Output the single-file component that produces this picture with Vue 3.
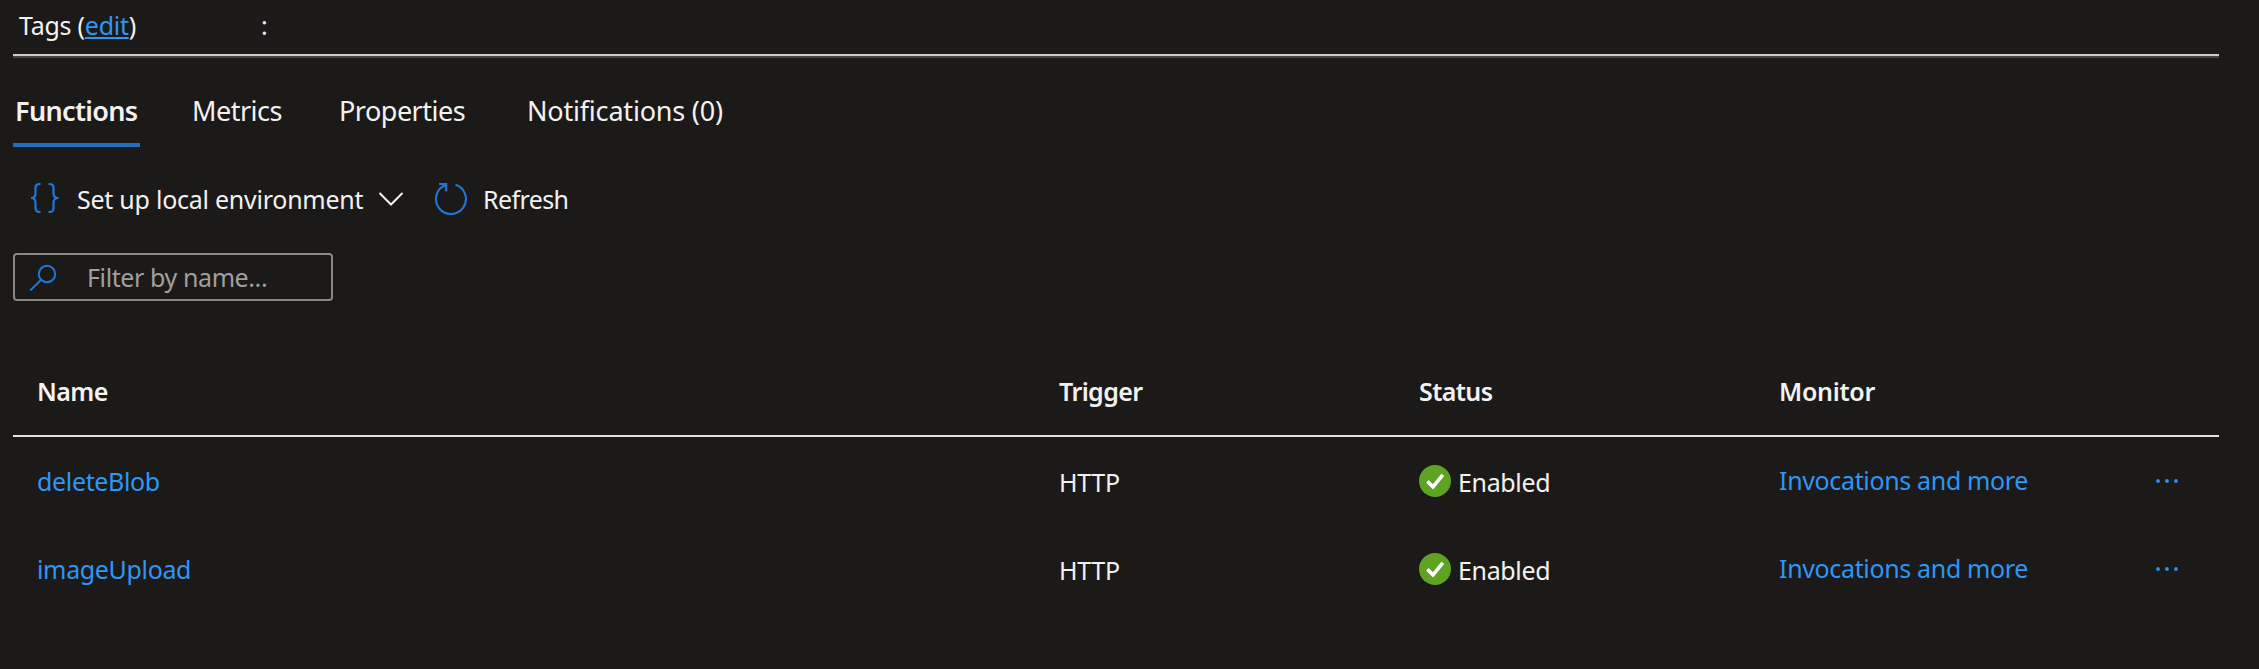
<script setup>
const tabs = [
  { label: 'Functions', key: 'functions' },
  { label: 'Metrics', key: 'metrics' },
  { label: 'Properties', key: 'properties' },
  { label: 'Notifications (0)', key: 'notifications' }
]
const rows = [
  { name: 'deleteBlob', key: 'delete' },
  { name: 'imageUpload', key: 'upload' }
]
</script>

<template>
  <main class="page">
    <section class="tags">
      <span class="tags-label">Tags (<a class="edit">edit</a>)</span>
      <span>:</span>
    </section>

    <nav class="tabs">
      <a v-for="(tab, i) in tabs" :key="tab.key" class="tab" :class="[tab.key, { active: i === 0 }]">{{ tab.label }}</a>
    </nav>

    <div class="toolbar">
      <svg class="braces" width="30" height="32" viewBox="0 0 30 32" fill="none" stroke="#1f78d8" stroke-width="2.2">
        <path d="M10.500 2H9.500Q5.500 2 5.500 6V11.500Q5.500 16 1 16Q5.500 16 5.500 20.500V26Q5.500 30 9.500 30H10.500" />
        <path d="M18.500 2H19.500Q23.500 2 23.500 6V11.500Q23.500 16 28.500 16Q23.500 16 23.500 20.500V26Q23.500 30 19.500 30H18.500" />
      </svg>
      <span class="setup">Set up local environment</span>
      <svg class="chevron" width="26" height="16" viewBox="0 0 26 16" fill="none" stroke="#f3f2f1" stroke-width="2">
        <path d="M1.500 2L13 13.500L24.500 2" />
      </svg>
      <svg class="reload" width="34" height="34" viewBox="0 0 34 34" fill="none" stroke="#1f78d8" stroke-width="2.100">
        <path d="M21.500 2.800A15 15 0 1 1 11.800 3" />
        <path d="M5 2H12.200V9.500" />
      </svg>
      <span class="refresh">Refresh</span>
    </div>

    <div class="filter">
      <svg width="28" height="28" viewBox="0 0 28 28" fill="none" stroke="#1f78d8" stroke-width="2">
        <circle cx="18" cy="10" r="8.200" />
        <path d="M12.200 15.800L1.200 26.500" />
      </svg>
      <span>Filter by name...</span>
    </div>

    <section class="table">
      <div class="row head">
        <span class="h-name">Name</span>
        <span class="h-trigger">Trigger</span>
        <span class="h-status">Status</span>
        <span class="h-monitor">Monitor</span>
      </div>
      <div v-for="row in rows" :key="row.key" class="row body">
        <a class="link" :class="row.key">{{ row.name }}</a>
        <span class="http">HTTP</span>
        <span class="status">
          <svg width="32" height="32" viewBox="0 0 32 32">
            <circle cx="16" cy="16" r="16" fill="#5fa324" />
            <path d="M8.300 16.400L14 21.800L23.800 9.800" fill="none" stroke="#fff" stroke-width="3.600" />
          </svg>
          <span class="enabled">Enabled</span>
        </span>
        <a class="link monitor">Invocations and more</a>
        <svg class="dots" width="24" height="6" viewBox="0 0 24 6" fill="#2f8ff0">
          <circle cx="3" cy="3" r="1.900" />
          <circle cx="12" cy="3" r="1.900" />
          <circle cx="21" cy="3" r="1.900" />
        </svg>
      </div>
    </section>
  </main>
</template>

<style>
body { background: #1b1a19; }
</style>

<style scoped>
.page {
  box-sizing: border-box;
  width: 2259px;
  height: 669px;
  padding: 0 40px 0 13px;
  overflow: hidden;
  background: #1b1a19;
  color: #f3f2f1;
  font: 25px/36px "Segoe UI", "Noto Sans", sans-serif;
  white-space: nowrap;
}
.tags {
  box-sizing: border-box;
  display: flex;
  height: 58px;
  padding: 7px 0 0 6px;
  border-bottom: 2px solid #444342;
  box-shadow: inset 0 -2px #cccbca;
}
.tags-label { width: 242px; letter-spacing: -0.25px; }
.edit {
  color: #2f96f5;
  text-decoration: underline;
  text-decoration-thickness: 2px;
  text-underline-offset: 2px;
}
.tabs { display: flex; height: 89px; font-size: 27px; }
.tab {
  box-sizing: border-box;
  height: 89px;
  padding: 35px 0 0 2px;
  letter-spacing: -0.5px;
}
.functions { width: 127px; margin-right: 50px; letter-spacing: -0.65px; }
.metrics { width: 147px; }
.properties { width: 188px; }
.notifications { letter-spacing: -0.2px; }
.active { border-bottom: 4px solid #2070bf; font-weight: 600; }
.toolbar { display: flex; height: 71px; margin-top: 35px; }
.braces { margin: 0 0 0 17px; }
.setup { width: 286px; margin: -1px 0 0 17px; letter-spacing: -0.25px; }
.chevron { margin: 9px 0 0 15px; }
.reload { margin-left: 30px; }
.refresh { margin: -1px 0 0 15px; letter-spacing: -0.6px; }
.filter {
  box-sizing: border-box;
  display: flex;
  width: 320px;
  height: 48px;
  padding: 4px 0 0 14px;
  border: 2px solid #8a8886;
  border-radius: 4px;
  color: #a19f9d;
  letter-spacing: -0.4px;
}
.filter svg { margin: 5px 30px 0 0; }
.table { margin-top: 72px; }
.row {
  box-sizing: border-box;
  display: grid;
  grid-template-columns: 1022px 360px 360px 376px auto;
  padding-left: 24px;
}
.head {
  height: 64px;
  border-bottom: 2px solid #e1e0df;
  font-weight: 600;
  letter-spacing: -0.6px;
}
.h-monitor { letter-spacing: -0.3px; }
.body { height: 88px; padding-top: 26px; }
.link { color: #2f96f5; letter-spacing: -0.35px; }
.http, .enabled { margin-top: 1px; }
.http { letter-spacing: -0.3px; }
.status { display: flex; gap: 7px; }
.status svg { margin-top: 2px; }
.enabled { letter-spacing: -0.35px; }
.monitor { margin-top: -1px; }
.dots { margin-top: 15px; }
</style>
